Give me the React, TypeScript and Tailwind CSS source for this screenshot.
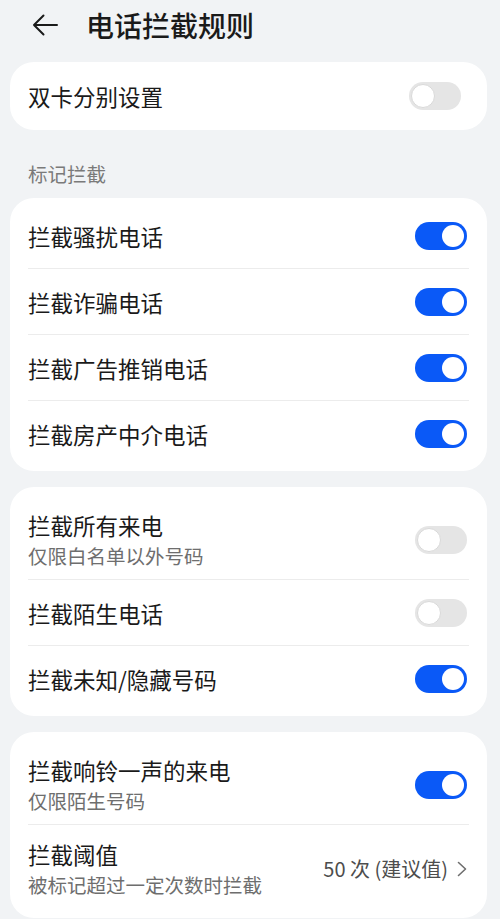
type ToggleProps = { on: boolean };

function Toggle({ on }: ToggleProps) {
  return (
    <div
      className={
        on
          ? "relative h-[28px] w-[52px] shrink-0 rounded-full bg-[#0a59f7]"
          : "relative h-[28px] w-[52px] shrink-0 rounded-full bg-[#e5e5e5]"
      }
    >
      <div
        className={
          on
            ? "absolute right-[3px] top-[3px] h-[22px] w-[22px] rounded-full bg-white"
            : "absolute left-[2px] top-[2px] h-[24px] w-[24px] rounded-full border border-[#d9d9d9] bg-white"
        }
      />
    </div>
  );
}

type Rule = {
  title: string;
  sub?: string;
  on: boolean;
};

const markRules: Rule[] = [
  { title: "拦截骚扰电话", on: true },
  { title: "拦截诈骗电话", on: true },
  { title: "拦截广告推销电话", on: true },
  { title: "拦截房产中介电话", on: true },
];

const callRules: Rule[] = [
  { title: "拦截所有来电", sub: "仅限白名单以外号码", on: false },
  { title: "拦截陌生电话", on: false },
  { title: "拦截未知/隐藏号码", on: true },
];

function Divider() {
  return <div className="mx-[18px] h-px bg-[#ececec]" />;
}

function RuleRow({ rule }: { rule: Rule }) {
  if (rule.sub) {
    return (
      <div className="flex items-center justify-between pb-[9px] pl-[18px] pr-[20px] pt-[18px]">
        <div className="flex flex-col gap-[2px]">
          <span className="text-[22.5px] leading-[30px] text-[#1a1a1a]">{rule.title}</span>
          <span className="text-[19.5px] leading-[28px] text-[#6e6e6e]">{rule.sub}</span>
        </div>
        <Toggle on={rule.on} />
      </div>
    );
  }
  return (
    <div className="flex h-[65px] items-center justify-between pl-[18px] pr-[20px]">
      <span className="text-[22.5px] leading-[30px] text-[#1a1a1a]">{rule.title}</span>
      <Toggle on={rule.on} />
    </div>
  );
}

function Card({ children }: { children: React.ReactNode }) {
  return <div className="ml-[10px] mr-[13px] rounded-[24px] bg-white py-[5px]">{children}</div>;
}

export default function App() {
  return (
    <div
      className="min-h-screen w-[500px] bg-[#f1f3f5] pb-[2px]"
      style={{ fontFamily: '"Noto Sans CJK SC", "Noto Sans", sans-serif' }}
    >
      <div className="flex h-[50px] items-center pl-[32px]">
        <svg width="26" height="22" viewBox="0 0 26 22" fill="none">
          <path
            d="M25 11H2M11.5 1.5L2 11l9.5 9.5"
            stroke="#1a1a1a"
            strokeWidth="2"
            strokeLinecap="round"
            strokeLinejoin="round"
          />
        </svg>
        <span className="ml-[28px] text-[28px] font-medium leading-[36px] text-[#1a1a1a]">电话拦截规则</span>
      </div>

      <div className="ml-[10px] mr-[13px] mt-[12px] flex h-[68px] items-center justify-between rounded-[24px] bg-white pl-[18px] pr-[26px]">
        <span className="text-[22.5px] leading-[30px] text-[#1a1a1a]">双卡分别设置</span>
        <Toggle on={false} />
      </div>

      <div className="pb-[11px] pl-[28px] pt-[31px] text-[19.5px] leading-[26px] text-[#7a7a7a]">标记拦截</div>

      <Card>
        {markRules.map((rule, i) => (
          <div key={rule.title}>
            {i > 0 ? <Divider /> : null}
            <RuleRow rule={rule} />
          </div>
        ))}
      </Card>

      <div className="h-[16px]" />

      <Card>
        {callRules.map((rule, i) => (
          <div key={rule.title}>
            {i > 0 ? <Divider /> : null}
            <RuleRow rule={rule} />
          </div>
        ))}
      </Card>

      <div className="h-[16px]" />

      <Card>
        <RuleRow rule={{ title: "拦截响铃一声的来电", sub: "仅限陌生号码", on: true }} />
        <Divider />
        <div className="flex items-center justify-between py-[14px] pl-[18px] pr-[20px]">
          <div className="flex flex-col gap-[2px]">
            <span className="text-[22.5px] leading-[30px] text-[#1a1a1a]">拦截阈值</span>
            <span className="text-[19.5px] leading-[28px] text-[#6e6e6e]">被标记超过一定次数时拦截</span>
          </div>
          <div className="flex items-center gap-[9px] text-[20px] leading-[28px] text-[#4d4d4d]">
            <span className="whitespace-pre">50 次 (建议值)</span>
            <svg width="10" height="16" viewBox="0 0 10 16" fill="none">
              <path d="M1.5 1.5L8.5 8l-7 6.5" stroke="#6e6e6e" strokeWidth="1.6" strokeLinecap="round" strokeLinejoin="round" />
            </svg>
          </div>
        </div>
      </Card>
    </div>
  );
}
